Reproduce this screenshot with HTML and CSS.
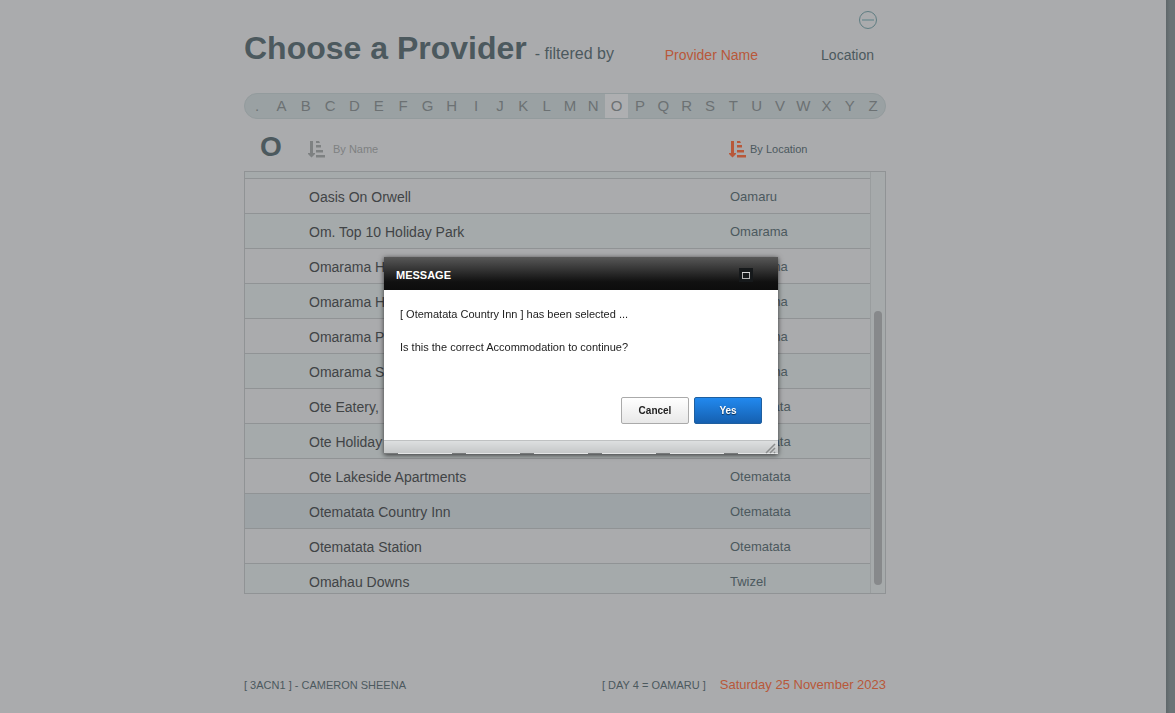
FILE: index.html
```html
<!DOCTYPE html>
<html lang="en">
<head>
  <meta charset="UTF-8">
  <meta name="viewport" content="width=device-width, initial-scale=1.0">
  <title>Choose a Provider</title>
  <link rel="stylesheet" href="styles.css">
</head>
<body>
  <div class="page">
    <main class="content">
      <div class="top-bar">
        <button type="button" class="icon-button" aria-label="Collapse">
          <svg width="20" height="20" viewBox="0 0 20 20" fill="none">
            <circle cx="10" cy="10" r="8.5" stroke="#5f7d82" stroke-width="1"/>
            <path d="M4 10h12" stroke="#82969a" stroke-width="2"/>
          </svg>
        </button>
      </div>

      <header class="page-header">
        <h1 class="page-title">Choose a Provider</h1>
        <span class="page-subtitle">- filtered by</span>
        <nav class="filters">
          <a href="#" class="filter-link active">Provider Name</a>
          <a href="#" class="filter-link">Location</a>
        </nav>
      </header>

      <div class="alphabet">
        <button type="button" class="letter wide">.</button>
        <button type="button" class="letter wide">A</button>
        <button type="button" class="letter wide">B</button>
        <button type="button" class="letter wide">C</button>
        <button type="button" class="letter wide">D</button>
        <button type="button" class="letter wide">E</button>
        <button type="button" class="letter wide">F</button>
        <button type="button" class="letter wide">G</button>
        <button type="button" class="letter wide">H</button>
        <button type="button" class="letter wide">I</button>
        <button type="button" class="letter">J</button>
        <button type="button" class="letter">K</button>
        <button type="button" class="letter">L</button>
        <button type="button" class="letter">M</button>
        <button type="button" class="letter">N</button>
        <button type="button" class="letter current">O</button>
        <button type="button" class="letter">P</button>
        <button type="button" class="letter">Q</button>
        <button type="button" class="letter">R</button>
        <button type="button" class="letter">S</button>
        <button type="button" class="letter">T</button>
        <button type="button" class="letter">U</button>
        <button type="button" class="letter">V</button>
        <button type="button" class="letter">W</button>
        <button type="button" class="letter">X</button>
        <button type="button" class="letter">Y</button>
        <button type="button" class="letter">Z</button>
      </div>

      <div class="sort-bar">
        <h2 class="sort-letter">O</h2>
        <button type="button" class="sort-button by-name">
          <svg class="sort-icon" width="17" height="17" viewBox="0 0 17 17" fill="currentColor">
            <path d="M2 0h3v12h2v1l-3.500 3.500L0 13v-1h2zM8 0h3l1 2H8zM8 4h5v2.500H8zM8 9h7v2.500H8zM8 14h9v2.500H8z"/>
          </svg>
          By Name
        </button>
        <button type="button" class="sort-button by-location">
          <svg class="sort-icon" width="17" height="17" viewBox="0 0 17 17" fill="currentColor">
            <path d="M2 0h3v12h2v1l-3.500 3.500L0 13v-1h2zM8 0h3l1 2H8zM8 4h5v2.500H8zM8 9h7v2.500H8zM8 14h9v2.500H8z"/>
          </svg>
          By Location
        </button>
      </div>

      <div class="list">
        <table class="providers">
          <tbody>
            <tr class="clipped"><td></td><td></td></tr>
            <tr><td>Oasis On Orwell</td><td>Oamaru</td></tr>
            <tr><td>Om. Top 10 Holiday Park</td><td>Omarama</td></tr>
            <tr><td>Omarama H</td><td>Omarama</td></tr>
            <tr><td>Omarama H</td><td>Omarama</td></tr>
            <tr><td>Omarama P</td><td>Omarama</td></tr>
            <tr><td>Omarama S</td><td>Omarama</td></tr>
            <tr><td>Ote Eatery,</td><td>Otematata</td></tr>
            <tr><td>Ote Holiday</td><td>Otematata</td></tr>
            <tr><td>Ote Lakeside Apartments</td><td>Otematata</td></tr>
            <tr class="selected"><td>Otematata Country Inn</td><td>Otematata</td></tr>
            <tr><td>Otematata Station</td><td>Otematata</td></tr>
            <tr><td>Omahau Downs</td><td>Twizel</td></tr>
          </tbody>
        </table>
        <div class="scrollbar"><div class="scrollbar-thumb"></div></div>
      </div>

      <footer class="page-footer">
        <span class="booking">[ 3ACN1 ] - CAMERON SHEENA</span>
        <span>[ DAY 4 = OAMARU ]</span>
        <span class="date">Saturday 25 November 2023</span>
      </footer>
    </main>
    <div class="page-edge"></div>
  </div>

  <div class="overlay">
    <div class="dialog" role="dialog" aria-labelledby="dialogTitle">
      <div class="dialog-header">
        <h3 class="dialog-title" id="dialogTitle">MESSAGE</h3>
        <button type="button" class="maximise" aria-label="Maximise">
          <svg width="14" height="14" viewBox="0 0 14 14" fill="none">
            <rect x="3.500" y="4.500" width="7" height="6" stroke="#b5b5b5"/>
            <path d="M3 4.500h8" stroke="#d8d8d8"/>
          </svg>
        </button>
      </div>
      <div class="dialog-body">
        <p>[ Otematata Country Inn ] has been selected ...</p>
        <p>Is this the correct Accommodation to continue?</p>
        <div class="dialog-actions">
          <button type="button" class="button">Cancel</button>
          <button type="button" class="button primary">Yes</button>
        </div>
      </div>
      <div class="dialog-footer">
        <svg width="11" height="11" viewBox="0 0 11 11" fill="none" stroke="#8b8d8e" stroke-width="1.500">
          <path d="M1 10L10 1M5 10l5-5M9 10l1-1"/>
        </svg>
      </div>
    </div>
  </div>
</body>
</html>
```
FILE: styles.css
```css
:root {
  --page: #aaabad;
  --edge: #6c7477;
  --bar: #9aa1a3;
  --row-alt: #a5aaab;
  --row-selected: #9da3a6;
  --line: #909395;
  --text: #414446;
  --slate: #4c595e;
  --muted: #7e8182;
  --accent: #b8583a;
}

* {
  margin: 0;
  padding: 0;
  box-sizing: border-box;
}

body {
  background-color: var(--page);
  color: var(--slate);
  font-family: "Liberation Sans", Arial, sans-serif;
  font-size: 14px;
}

button {
  border: none;
  background: none;
  font-family: inherit;
  cursor: pointer;
}

.page {
  display: flex;
  min-height: 100vh;
  overflow: hidden;
}

.page-edge {
  width: 9px;
  background: linear-gradient(to right, #5f676a, var(--edge) 4px);
}

.content {
  width: 100%;
  max-width: 642px;
  margin: 0 auto;
  position: relative;
  right: 18px;
}

.top-bar {
  display: flex;
  justify-content: flex-end;
  padding: 10px 8px 0 0;
}

.icon-button,
.icon-button svg {
  display: block;
  height: 20px;
}

.page-header {
  display: flex;
  align-items: baseline;
  height: 63px;
}

.page-title {
  font-size: 32px;
  line-height: 36px;
}

.page-subtitle {
  margin-left: 8px;
  font-size: 16px;
}

.filters {
  display: flex;
  flex: 1;
  align-self: flex-start;
  justify-content: flex-end;
  gap: 63px;
  padding: 17px 12px 0 0;
}

.filter-link {
  color: var(--slate);
  font-size: 14px;
  text-decoration: none;
}

.filter-link.active {
  color: var(--accent);
}

.alphabet {
  display: flex;
  height: 26px;
  border: 1px solid #939b9d;
  border-radius: 13px;
  background-color: var(--bar);
  overflow: hidden;
}

.letter {
  flex: 1 0 23px;
  padding-bottom: 2px;
  color: #6c7173;
  font-size: 15px;
  text-align: center;
}

.letter.wide {
  flex-basis: 24px;
}

.letter.current {
  background-color: #aeafb1;
}

.sort-bar {
  display: grid;
  grid-template-columns: 64px 421px 1fr;
  align-items: center;
  height: 52px;
  padding-top: 8px;
}

.sort-letter {
  padding: 0 0 4px 16px;
  font-size: 28px;
  line-height: 28px;
}

.sort-button {
  display: flex;
  align-items: center;
  font-size: 11px;
}

.by-name {
  gap: 8px;
  color: var(--muted);
}

.by-location {
  gap: 4px;
  color: var(--slate);
}

.by-location .sort-icon {
  color: var(--accent);
}

.list {
  display: flex;
  height: 423px;
  border: 1px solid var(--line);
  overflow: hidden;
}

.providers {
  flex: 1;
  height: 426px;
  border-collapse: collapse;
  table-layout: fixed;
}

.providers tr {
  height: 35px;
  border-bottom: 1px solid var(--line);
}

.providers tr:nth-child(odd) {
  background-color: var(--row-alt);
}

.providers tr.clipped {
  height: 6px;
}

.providers tr.selected {
  background-color: var(--row-selected);
}

.providers td {
  padding: 3px 0 0 64px;
  color: var(--text);
  font-size: 14px;
  line-height: 20px;
}

.providers td:last-child {
  width: 140px;
  padding-left: 0;
  color: var(--slate);
  font-size: 13px;
}

.scrollbar {
  display: flex;
  width: 15px;
  padding: 139px 3px 8px;
  border-left: 1px solid #999d9e;
  background-color: #a6aaab;
}

.scrollbar-thumb {
  width: 8px;
  border-radius: 4px;
  background-color: #87898b;
}

.page-footer {
  display: flex;
  align-items: baseline;
  margin-top: 83px;
  font-size: 11px;
}

.booking {
  flex: 1;
}

.date {
  margin-left: 14px;
  color: var(--accent);
  font-size: 13px;
}

/* Dialog */
.overlay {
  position: fixed;
  inset: 0;
  display: flex;
  align-items: center;
  justify-content: center;
  padding: 0 13px 2px 0;
}

.dialog {
  width: 394px;
  background-color: #fff;
  box-shadow: 0 1px 5px rgba(0, 0, 0, 0.7);
}

.dialog-header {
  display: flex;
  align-items: center;
  justify-content: space-between;
  height: 33px;
  padding: 2px 25px 0 12px;
  background: linear-gradient(#585858, #111 75%, #0d0d0d);
}

.dialog-title {
  color: #fff;
  font-size: 11px;
}

.maximise {
  width: 14px;
  height: 14px;
  background-color: #16191b;
}

.maximise svg {
  display: block;
}

.dialog-body {
  padding: 16px;
  color: #222;
  font-size: 11px;
}

.dialog-body p {
  margin-bottom: 17px;
  line-height: 16px;
}

.dialog-actions {
  display: flex;
  justify-content: flex-end;
  gap: 5px;
  margin-top: 42px;
}

.button {
  width: 68px;
  height: 27px;
  border: 1px solid #aaa;
  border-radius: 2px;
  background: linear-gradient(#fff, #e8e8e8);
  color: #222;
  font-size: 10px;
  font-weight: bold;
}

.button.primary {
  border-color: #1f5f9f;
  background: linear-gradient(#2289ef, #1560b0);
  color: #fff;
  text-shadow: 0 1px 1px rgba(0, 0, 0, 0.6);
}

.dialog-footer {
  display: flex;
  justify-content: flex-end;
  height: 14px;
  padding: 2px 2px 0 0;
  border-top: 1px solid #bfc1c2;
  background:
    repeating-linear-gradient(to right, #77797a 0 14px, #e4e5e6 14px 68px) left bottom / 100% 1px no-repeat,
    linear-gradient(#dddfe0, #c3c5c6);
}
```
